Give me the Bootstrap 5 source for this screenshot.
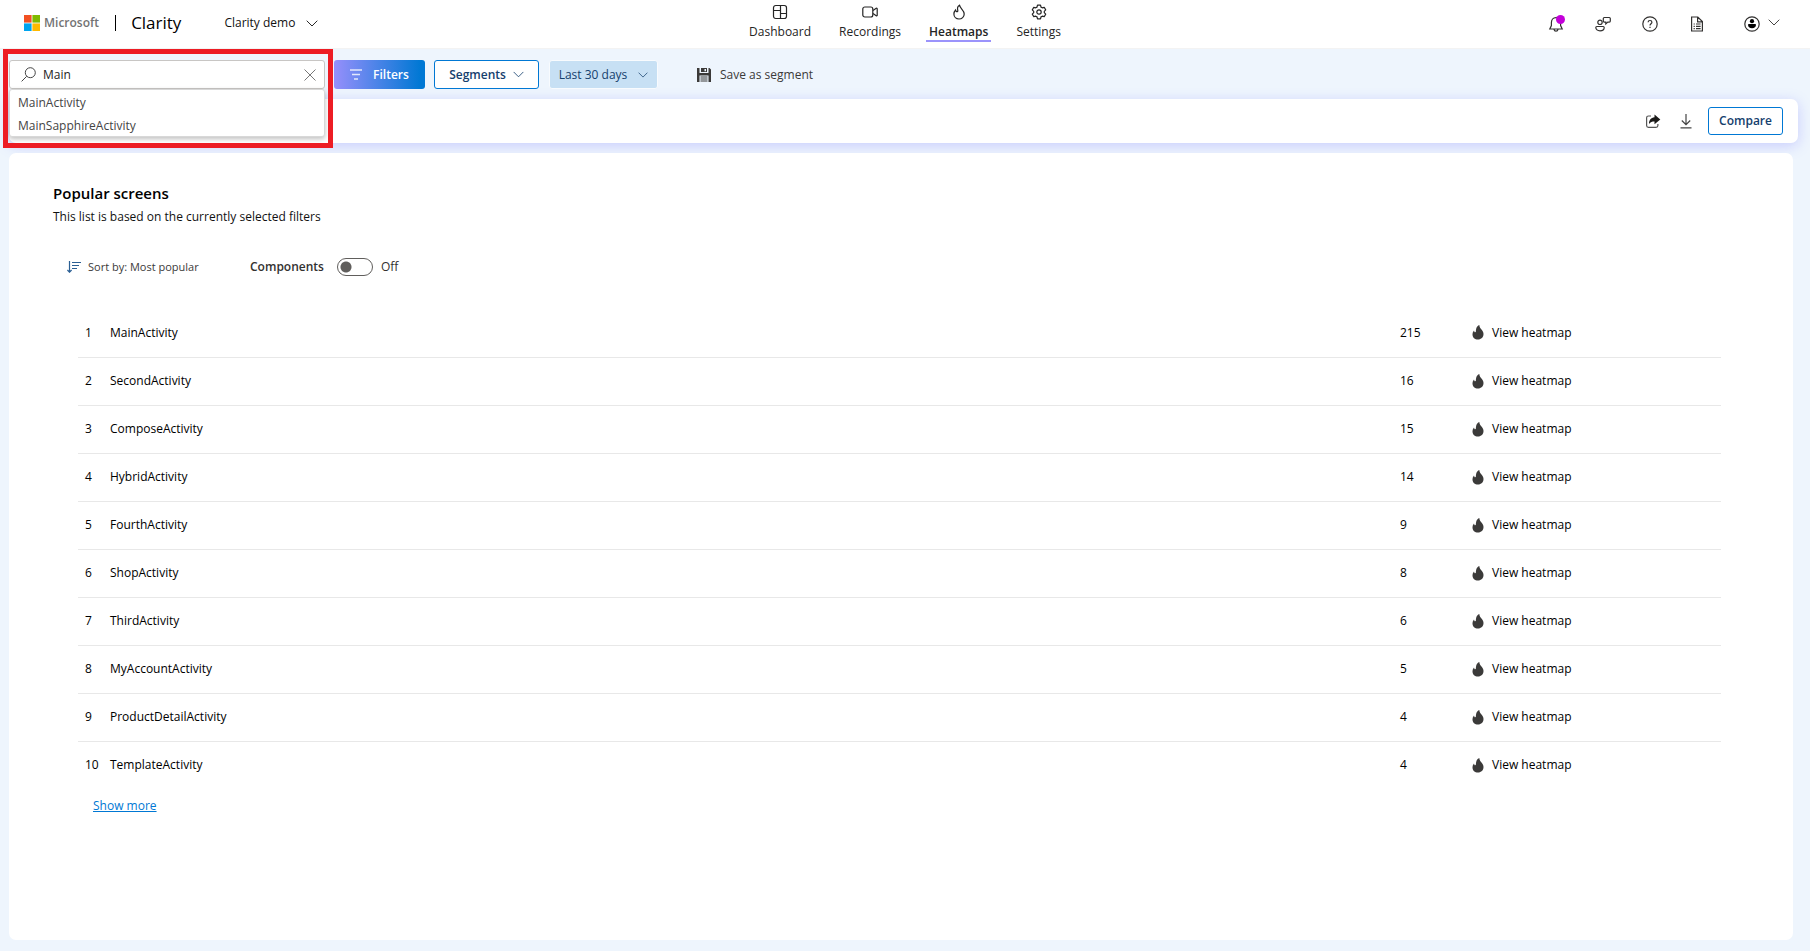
<!DOCTYPE html>
<html lang="en">
<head>
<meta charset="utf-8">
<meta name="viewport" content="width=device-width, initial-scale=1">
<title>Clarity - Heatmaps</title>
<link href="https://cdn.jsdelivr.net/npm/bootstrap@5.3.0/dist/css/bootstrap.min.css" rel="stylesheet">
<style>
  body { font-family: "Open Sans", "Noto Sans", sans-serif; font-size: 12px; line-height: 16px; color: #111; background: #eef5fd; }
  svg { display: block; flex: none; }
  a { color: inherit; }
  .ink { color: #323130; }
  .semi { font-weight: 600; }

  .top-bar { display: grid; grid-template-columns: 1fr auto 1fr; height: 49px; background: #fff; border-bottom: 1px solid #f3f3f3; }
  .brand-side { padding: 4px 0 6px 24px; }
  .ms-word { font-size: 12px; font-weight: 600; color: #737373; margin-left: 4px; }
  .brand-rule { width: 1px; height: 16px; background: #000; margin: 0 15px 0 16px; }
  .clarity-word { font-size: 17px; line-height: 24px; color: #000; }
  .project-btn { margin-left: 43px; gap: 11px; }
  .plain-btn { border: 0; background: none; padding: 0; display: flex; align-items: center; color: inherit; }
  .main-nav { gap: 22px; padding-top: 4px; }
  .main-nav a { display: flex; flex-direction: column; align-items: center; gap: 4px; height: 38px; padding: 0 3px; text-decoration: none; color: #242424; border-bottom: 2px solid transparent; }
  .main-nav a.active { font-weight: 600; border-bottom-color: #9b93fb; }
  .tool-side { gap: 31px; padding: 0 30px 0 0; }
  .bell-dot { position: absolute; width: 9px; height: 9px; right: -1px; top: 0; border-radius: 50%; background: #c300d9; }

  .filter-bar { height: 50px; padding: 11px 9px 10px; }
  .search-wrap { width: 316px; height: 29px; }
  .search-box { height: 29px; border: 1px solid #c8c6c4; border-radius: 3px; background: #fff; padding: 0 8px 0 11px; gap: 7px; color: #444; }
  .search-box input { border: 0; outline: 0; padding: 0; flex: 1; min-width: 0; background: none; color: #242424; }
  .suggest { position: absolute; z-index: 3; top: 29px; left: 0; right: 0; height: 48px; background: #fff; border: 1px solid #d8d8d8; border-radius: 3px; box-shadow: 0 2px 5px rgba(0,0,0,.25); padding: 1px 8px; }
  .suggest a { display: block; line-height: 23px; color: #444; text-decoration: none; }
  .callout-frame { position: absolute; z-index: 4; inset: -11px -8px -59px -6px; border: 5px solid #ed1c24; pointer-events: none; }
  .tool-btn { height: 29px; border-radius: 3px; border: 1px solid #0078d4; display: flex; align-items: center; justify-content: center; background: #fff; color: #15406d; padding: 0; }
  .filters-btn { width: 91px; gap: 11px; margin-left: 9px; color: #fff; border: 0; background: linear-gradient(90deg, #968ffb, #0078d4 95%); }
  .segments-btn { width: 105px; gap: 7px; margin-left: 9px; }
  .days-btn { width: 109px; gap: 11px; margin-left: 10px; background: #c7e0f4; border-color: #f8fbfe; }
  .save-btn { gap: 9px; margin-left: 39px; height: 29px; color: #3b3a39; }

  .action-bar { height: 44px; margin: 0 12px 0 9px; padding: 0 15px 0 0; border-radius: 7px; background: #fff; box-shadow: 0 3px 14px rgba(125,125,255,.33); }
  .compare-btn { width: 75px; height: 28px; }

  .screens-panel { margin: 10px 17px 11px 9px; padding: 31px 72px 126px 44px; border-radius: 7px; background: #fff; position: relative; }
  .screens-panel h1 { font-size: 15px; line-height: 18px; margin: 0 0 7px; font-weight: 600; color: #000; }
  .sort-row { margin: 24px 0 0 14px; height: 36px; }
  .sort-btn { font-size: 11px; gap: 7px; color: #3b3a39; width: 183px; }
  .switch-box { appearance: none; width: 36px; height: 18px; border: 1px solid #605e5c; border-radius: 9px; margin: 0 8px 0 13px; background: radial-gradient(circle at 8px 8px, #605e5c 5px, transparent 6px); }
  .screens-table { width: calc(100% - 25px); margin-left: 25px; table-layout: fixed; border-collapse: collapse; color: #000; }
  .screens-table td { height: 48px; padding: 0; border-bottom: 1px solid #e8e8e8; vertical-align: middle; }
  .screens-table tr:last-child td { border-bottom: 0; }
  .screens-table td:first-child { padding-left: 7px; }
  .w-num { width: 32px; } .w-count { width: 72px; } .w-view { width: 249px; }
  .view-btn { gap: 8px; }
  .view-btn svg { color: #3b3a39; }
  .more-link { display: inline-block; margin: 9px 0 0 40px; color: #0078d4; }
</style>
</head>
<body>
<svg width="0" height="0" class="position-absolute" aria-hidden="true">
  <symbol id="chev" viewBox="0 0 12 7"><path d="M.7.7 6 6 11.300.7" fill="none" stroke="currentColor" stroke-width=".9"/></symbol>
  <symbol id="flame" viewBox="0 0 12 15"><path d="M7.300 0c.2 2.200 1.200 3.500 2.400 4.700 1 1.100 1.800 2.500 1.800 4.300 0 3.200-2.300 5.500-5.500 5.500S.5 12.300.5 9.400c0-1.500.5-2.900 1.500-4l.5 1.500c.3.600 1.300.5 1.400-.3C4 4 4.300 1.300 7.300 0z" fill="currentColor"/></symbol>
</svg>

<header class="top-bar">
  <div class="brand-side d-flex align-items-center">
    <svg width="16" height="16" viewBox="0 0 16 16"><path fill="#f25022" d="M0 0h7.600v7.600H0z"/><path fill="#7fba00" d="M8.400 0H16v7.600H8.400z"/><path fill="#00a4ef" d="M0 8.400h7.600V16H0z"/><path fill="#ffb900" d="M8.400 8.400H16V16H8.400z"/></svg>
    <span class="ms-word">Microsoft</span>
    <span class="brand-rule"></span>
    <span class="clarity-word">Clarity</span>
    <button type="button" class="plain-btn project-btn ink">Clarity demo <svg width="12" height="7"><use href="#chev"/></svg></button>
  </div>
  <nav class="main-nav d-flex" aria-label="Main">
    <a href="#"><svg width="16" height="16" viewBox="0 0 16 16" fill="none" stroke="currentColor" stroke-width="1.200"><rect x="1.500" y="1.500" width="13" height="13" rx="2.200"/><path d="M8.500 1.500v13M1.500 6.500h7M8.500 9.500h6" /></svg>Dashboard</a>
    <a href="#"><svg width="16" height="16" viewBox="0 0 16 16" fill="none" stroke="currentColor" stroke-width="1.200"><rect x=".8" y="3" width="10" height="10" rx="2"/><path d="m11 6.500 3.200-2.200c.5-.3 1 0 1 .5v6.400c0 .5-.5.8-1 .5L11 9.500"/></svg>Recordings</a>
    <a href="#" class="active" aria-current="page"><svg width="16" height="16" viewBox="0 0 16 16" fill="none" stroke="currentColor" stroke-width="1.200"><path d="M8.500 1.200c-1.700.8-2.300 3-1.700 5.400.2.900-.9 1.500-1.500.8-.4-.4-.6-.9-.7-1.400-1.100 1.200-1.700 2.500-1.700 4 0 3 2.300 5 5.100 5s5.200-2.100 5.200-5c0-3.800-3.900-4.900-4.700-8.800z"/></svg>Heatmaps</a>
    <a href="#"><svg width="16" height="16" viewBox="0 0 16 16" fill="none" stroke="currentColor" stroke-width="1.200"><circle cx="8" cy="8" r="2.200"/><path stroke-linejoin="round" d="m6.500 1.200 3 0 .5 1.900 1.300.7 1.900-.5 1.500 2.600-1.400 1.400v1.400l1.400 1.400-1.500 2.600-1.900-.5-1.300.7-.5 1.900h-3L6 12.900l-1.300-.7-1.900.5-1.500-2.600 1.400-1.400V7.300L1.300 5.900l1.500-2.600 1.900.5L6 3.100z"/></svg>Settings</a>
  </nav>
  <div class="tool-side ink d-flex align-items-center justify-content-end">
    <button type="button" class="plain-btn position-relative" aria-label="Notifications"><svg width="16" height="18" viewBox="0 0 16 18" fill="none" stroke="currentColor" stroke-width="1.200"><path d="M8 2.600C5 2.600 3.400 4.800 3.400 7.500v3L1.800 14h12.400l-1.600-3.500v-3C12.600 4.800 11 2.600 8 2.600zM6 14.300c.2 1.300 1 1.900 2 1.900s1.800-.6 2-1.900"/></svg><span class="bell-dot"></span></button>
    <button type="button" class="plain-btn" aria-label="Feedback"><svg width="16" height="16" viewBox="0 0 16 16" fill="none" stroke="currentColor" stroke-width="1.200"><circle cx="5" cy="6.300" r="2.200"/><path d="M1.800 10.500h6.400c.6 0 1 .4 1 1 0 2-1.700 3.300-4.200 3.300S.8 13.500.8 11.500c0-.6.400-1 1-1zM9.300 1.500h5c.6 0 1 .4 1 1v2.600c0 .6-.4 1-1 1h-1.500l-2 1.800V6.100h-1.500c-.6 0-1-.4-1-1V2.500c0-.6.400-1 1-1z"/></svg></button>
    <button type="button" class="plain-btn" aria-label="Help"><svg width="16" height="16" viewBox="0 0 16 16" fill="none" stroke="currentColor" stroke-width="1.200"><circle cx="8" cy="8" r="7.200"/><path d="M6.100 6.300c0-1.100.8-1.800 1.900-1.800s1.900.7 1.900 1.800C9.900 7.800 8 7.800 8 9.600M8 10.800v1.200"/></svg></button>
    <button type="button" class="plain-btn" aria-label="Documents"><svg width="16" height="16" viewBox="0 0 16 16" fill="none" stroke="currentColor" stroke-width="1.200"><path d="M2.600 1h6.200l4.600 4.600V15H2.600zM8.600 1v4.800h4.800M4.600 8h1.200M7 8h4.600M4.600 10.300h1.200M7 10.300h4.600M4.600 12.600h1.200M7 12.600h4.600"/></svg></button>
    <button type="button" class="plain-btn ms-2 gap-2" aria-label="Account"><svg width="16" height="16" viewBox="0 0 16 16"><circle cx="8" cy="8" r="7.200" fill="none" stroke="currentColor" stroke-width="1.200"/><circle cx="8" cy="5.200" r="2.100"/><path d="M4.800 8h6.400c.5 0 .8.300.8.800 0 2-1.500 3.400-4 3.400S4 10.800 4 8.800c0-.5.300-.8.800-.8z"/></svg><svg width="12" height="7" class="mb-1"><use href="#chev"/></svg></button>
  </div>
</header>

<div class="filter-bar d-flex align-items-center">
  <div class="search-wrap position-relative">
    <div class="search-box d-flex align-items-center">
      <svg width="15" height="15" viewBox="0 0 15 15" fill="none" stroke="currentColor"><circle cx="9.300" cy="5.700" r="5"/><path d="M5.700 9.300.6 14.400"/></svg>
      <input type="text" value="Main" aria-label="Search screens">
      <button type="button" class="plain-btn" aria-label="Clear"><svg width="12" height="12" viewBox="0 0 12 12" stroke="#777"><path d="m.5.5 11 11M11.500.5l-11 11"/></svg></button>
    </div>
    <div class="suggest"><a href="#">MainActivity</a><a href="#">MainSapphireActivity</a></div>
    <div class="callout-frame"></div>
  </div>
  <button type="button" class="tool-btn filters-btn semi"><svg width="12" height="11" viewBox="0 0 12 11" stroke="#fff" stroke-opacity=".8"><path d="M0 1h12M2 5.500h8M4 10h4" stroke-width="1.300"/></svg>Filters</button>
  <button type="button" class="tool-btn segments-btn semi">Segments <svg width="11" height="7"><use href="#chev"/></svg></button>
  <button type="button" class="tool-btn days-btn">Last 30 days <svg width="10" height="6"><use href="#chev"/></svg></button>
  <button type="button" class="plain-btn save-btn"><svg width="14" height="14" viewBox="0 0 14 14"><path fill="#3b3a39" d="M0 0h2.500v5h9V0h1L14 1.500V14H0z"/><path fill="#3b3a39" d="M4 0h6v4H4z"/><path fill="#eef5fd" d="M7.500 1H9v2.200H7.500zM2.500 7.500h9V14h-9z"/><path d="M3.500 9h7M3.500 11h7M3.500 13h7" stroke="#3b3a39"/></svg>Save as segment</button>
</div>

<div class="action-bar d-flex align-items-center justify-content-end">
  <button type="button" class="plain-btn me-3" aria-label="Share"><svg width="20" height="16" viewBox="0 0 20 16"><path d="M7 3H4.500C3.400 3 2.600 3.800 2.600 4.800v7.700c0 1 .8 1.800 1.900 1.800h7.500c1 0 1.900-.8 1.900-1.800V11" fill="none" stroke="#555" stroke-width="1.200"/><path d="m10.500 1.500 5.800 4.900-5.800 4.900V8.500C8 8.500 6.500 9 5 11c0-4 2-6.500 5.500-6.800z" fill="#1b1a19"/></svg></button>
  <button type="button" class="plain-btn me-3" aria-label="Download"><svg width="12" height="16" viewBox="0 0 12 16" fill="none" stroke="#444" stroke-width="1.200"><path d="M6 1v10.500M1.800 7.500 6 11.700l4.200-4.200M.5 14.800h11"/></svg></button>
  <button type="button" class="tool-btn compare-btn semi">Compare</button>
</div>

<main class="screens-panel">
  <h1>Popular screens</h1>
  <div>This list is based on the currently selected filters</div>
  <div class="sort-row d-flex align-items-center ink">
    <button type="button" class="plain-btn sort-btn"><svg width="14" height="12" viewBox="0 0 14 12" fill="none" stroke="#2b5f94"><path d="M2.500 0v11M.4 9l2.100 2.200L4.600 9M5 1.500h9M5 4.500h7M5 7.500h5" stroke-width="1.200"/></svg>Sort by: Most popular</button>
    <label for="components" class="semi">Components</label>
    <input type="checkbox" role="switch" id="components" class="switch-box"><span>Off</span>
  </div>
  <table class="screens-table mt-4">
    <colgroup><col class="w-num"><col><col class="w-count"><col class="w-view"></colgroup>
    <tbody id="screenRows"></tbody>
  </table>
  <a href="#" class="more-link">Show more</a>
</main>

<script>
  const screens = [["MainActivity", 215], ["SecondActivity", 16], ["ComposeActivity", 15], ["HybridActivity", 14], ["FourthActivity", 9],
    ["ShopActivity", 8], ["ThirdActivity", 6], ["MyAccountActivity", 5], ["ProductDetailActivity", 4], ["TemplateActivity", 4]];
  document.getElementById("screenRows").innerHTML = screens.map(([name, views], i) =>
    `<tr><td>${i + 1}</td><td>${name}</td><td>${views}</td><td><button type="button" class="plain-btn view-btn"><svg width="12" height="15"><use href="#flame"/></svg>View heatmap</button></td></tr>`).join("");
</script>
<script src="https://cdn.jsdelivr.net/npm/bootstrap@5.3.0/dist/js/bootstrap.bundle.min.js"></script>
</body>
</html>
